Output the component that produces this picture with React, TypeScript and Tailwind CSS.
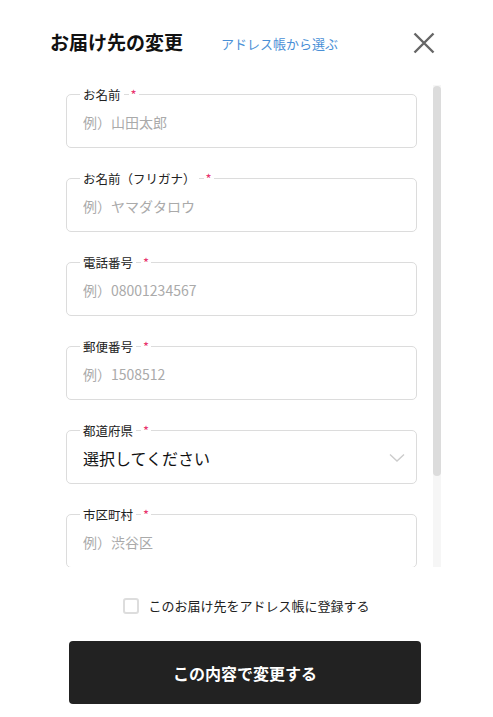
import React from 'react';

type Field = {
  label: string;
  placeholder?: string;
  select?: boolean;
};

const fields: Field[] = [
  { label: 'お名前', placeholder: '例）山田太郎' },
  { label: 'お名前（フリガナ）', placeholder: '例）ヤマダタロウ' },
  { label: '電話番号', placeholder: '例）08001234567' },
  { label: '郵便番号', placeholder: '例）1508512' },
  { label: '都道府県', select: true },
  { label: '市区町村', placeholder: '例）渋谷区' },
];

const FormField: React.FC<{ field: Field }> = ({ field }) => {
  return (
    <div className="relative h-[54px] shrink-0 rounded-[5px] border border-[#dcdcdc]">
      <div className="absolute -top-[9px] left-[13px] flex items-center h-[18px]">
        <span className="bg-white px-[3px] text-[12.5px] leading-[18px] text-[#222]">{field.label}</span>
        <span className="ml-[5px] bg-white px-[2px] text-[13px] leading-[18px] text-[#e8336d]">*</span>
      </div>
      {field.select ? (
        <div className="flex h-full items-center justify-between pl-4 pr-[11px] pt-[2px]">
          <span className="text-[16px] text-[#111]">選択してください</span>
          <svg width="16" height="10" viewBox="0 0 16 10" fill="none">
            <path d="M1 1.5 L8 8 L15 1.5" stroke="#cccccc" strokeWidth="1.4" />
          </svg>
        </div>
      ) : (
        <input
          className="h-full w-full bg-transparent pl-4 pr-4 pt-[2px] text-[14px] text-[#222] outline-none placeholder:text-[#aaaaaa]"
          placeholder={field.placeholder}
        />
      )}
    </div>
  );
};

export default function App() {
  return (
    <div
      className="h-[717px] w-[493px] bg-white"
      style={{ fontFamily: '"Noto Sans CJK JP", "Noto Sans", sans-serif' }}
    >
      <div className="flex h-[85px] items-center pl-[50px]">
        <h1 className="text-[19px] font-bold text-[#111]">お届け先の変更</h1>
        <a className="ml-[38px] pt-[3px] text-[13px] text-[#4a8fd6]" href="#">
          アドレス帳から選ぶ
        </a>
        <button className="ml-auto mr-[58px] pt-[1px]" aria-label="閉じる">
          <svg width="22" height="22" viewBox="0 0 22 22" fill="none">
            <path d="M1.5 1.5 L20.5 20.5 M20.5 1.5 L1.5 20.5" stroke="#666666" strokeWidth="2.4" />
          </svg>
        </button>
      </div>

      <div className="ml-[50px] flex h-[482px] w-[391px]">
        <div className="flex w-[383px] flex-col gap-[30px] overflow-hidden pl-4 pr-4 pt-[9px]">
          {fields.map((f) => (
            <FormField key={f.label} field={f} />
          ))}
        </div>
        {/* scrollbar */}
        <div className="h-full w-2 bg-[#f6f6f6]">
          <div className="mt-[1px] h-[390px] w-2 rounded-[4px] bg-[#dcdcdc]" />
        </div>
      </div>

      <label className="mt-[30px] flex h-[18px] items-center justify-center gap-[9px]">
        <span className="h-4 w-4 shrink-0 rounded-[3px] border-2 border-[#dddddd]" />
        <span className="text-[13px] leading-[18px] text-[#222]">このお届け先をアドレス帳に登録する</span>
      </label>

      <button className="ml-[69px] mt-[26px] flex h-[63px] w-[352px] items-center justify-center rounded-[4px] bg-[#222222] text-[16px] font-bold text-white">
        この内容で変更する
      </button>
    </div>
  );
}
